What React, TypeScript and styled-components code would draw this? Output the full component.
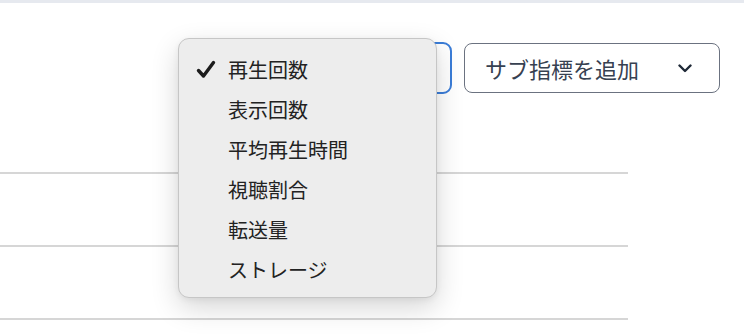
import React from "react"
import styled, { createGlobalStyle } from "styled-components"

const metrics = ["再生回数", "表示回数", "平均再生時間", "視聴割合", "転送量", "ストレージ"]

const GlobalStyle = createGlobalStyle`
  body {
    margin: 0;
    background: #ffffff;
    font-family: "Noto Sans CJK JP", "Noto Sans", sans-serif;
  }
`

export default function App() {
  return (
    <Page>
      <GlobalStyle />
      <TopBand />
      <Toolbar>
        <SelectWrap>
          <MainSelect />
          <Menu>
            {metrics.map((m, i) => (
              <MenuItem key={m}>
                <Check>
                  {i === 0 && (
                    <svg width="20" height="19" viewBox="0 0 20 19">
                      <path
                        d="M2.5 10.5 L7.5 16 L17.5 2.5"
                        fill="none"
                        stroke="#1c1c1c"
                        strokeWidth="3.4"
                        strokeLinecap="round"
                        strokeLinejoin="round"
                      />
                    </svg>
                  )}
                </Check>
                {m}
              </MenuItem>
            ))}
          </Menu>
        </SelectWrap>
        <SubButton>
          サブ指標を追加
          <svg width="14" height="9" viewBox="0 0 14 9">
            <path
              d="M1.5 1.5 L7 7 L12.5 1.5"
              fill="none"
              stroke="#1f2937"
              strokeWidth="2.4"
              strokeLinecap="round"
              strokeLinejoin="round"
            />
          </svg>
        </SubButton>
      </Toolbar>
      <Rows>
        <Row />
        <Row />
        <Row />
      </Rows>
    </Page>
  )
}

const Page = styled.div`
  width: 744px;
  height: 334px;
  overflow: hidden;
  position: relative;
`

const TopBand = styled.div`
  height: 3px;
  background: #e6e9ef;
`

const Toolbar = styled.div`
  display: flex;
  justify-content: flex-end;
  align-items: center;
  gap: 12px;
  padding-right: 24px;
  margin-top: 39px;
  height: 52px;
`

const SelectWrap = styled.div`
  position: relative;
  width: 262px;
  height: 52px;
`

const MainSelect = styled.div`
  box-sizing: border-box;
  width: 100%;
  height: 100%;
  border: 2px solid #3b7dd8;
  border-radius: 9px;
  background: #fff;
`

const Menu = styled.div`
  position: absolute;
  left: -12px;
  top: -4px;
  z-index: 2;
  box-sizing: border-box;
  width: 259px;
  height: 260px;
  padding: 10px 0 10px;
  background: #ededed;
  border: 1px solid #c6c6c6;
  border-radius: 11px;
  box-shadow: 0 10px 28px rgba(0, 0, 0, 0.16), 0 2px 6px rgba(0, 0, 0, 0.06);
`

const MenuItem = styled.div`
  display: flex;
  align-items: center;
  height: 40px;
  padding-left: 17px;
  font-size: 20px;
  color: #222222;
  white-space: nowrap;
`

const Check = styled.span`
  display: inline-flex;
  width: 32px;
  align-items: center;
  padding-top: 1px;
`

const SubButton = styled.div`
  box-sizing: border-box;
  display: flex;
  align-items: center;
  justify-content: space-between;
  width: 256px;
  height: 50px;
  padding: 0 27px 0 20px;
  border: 1px solid #6b7280;
  border-radius: 8px;
  font-size: 22px;
  color: #374151;
  background: #fff;
`

const Rows = styled.div`
  width: 628px;
  margin-top: 7px;
`

const Row = styled.div`
  height: 71px;
  border-bottom: 2px solid #d6d6d6;
`
